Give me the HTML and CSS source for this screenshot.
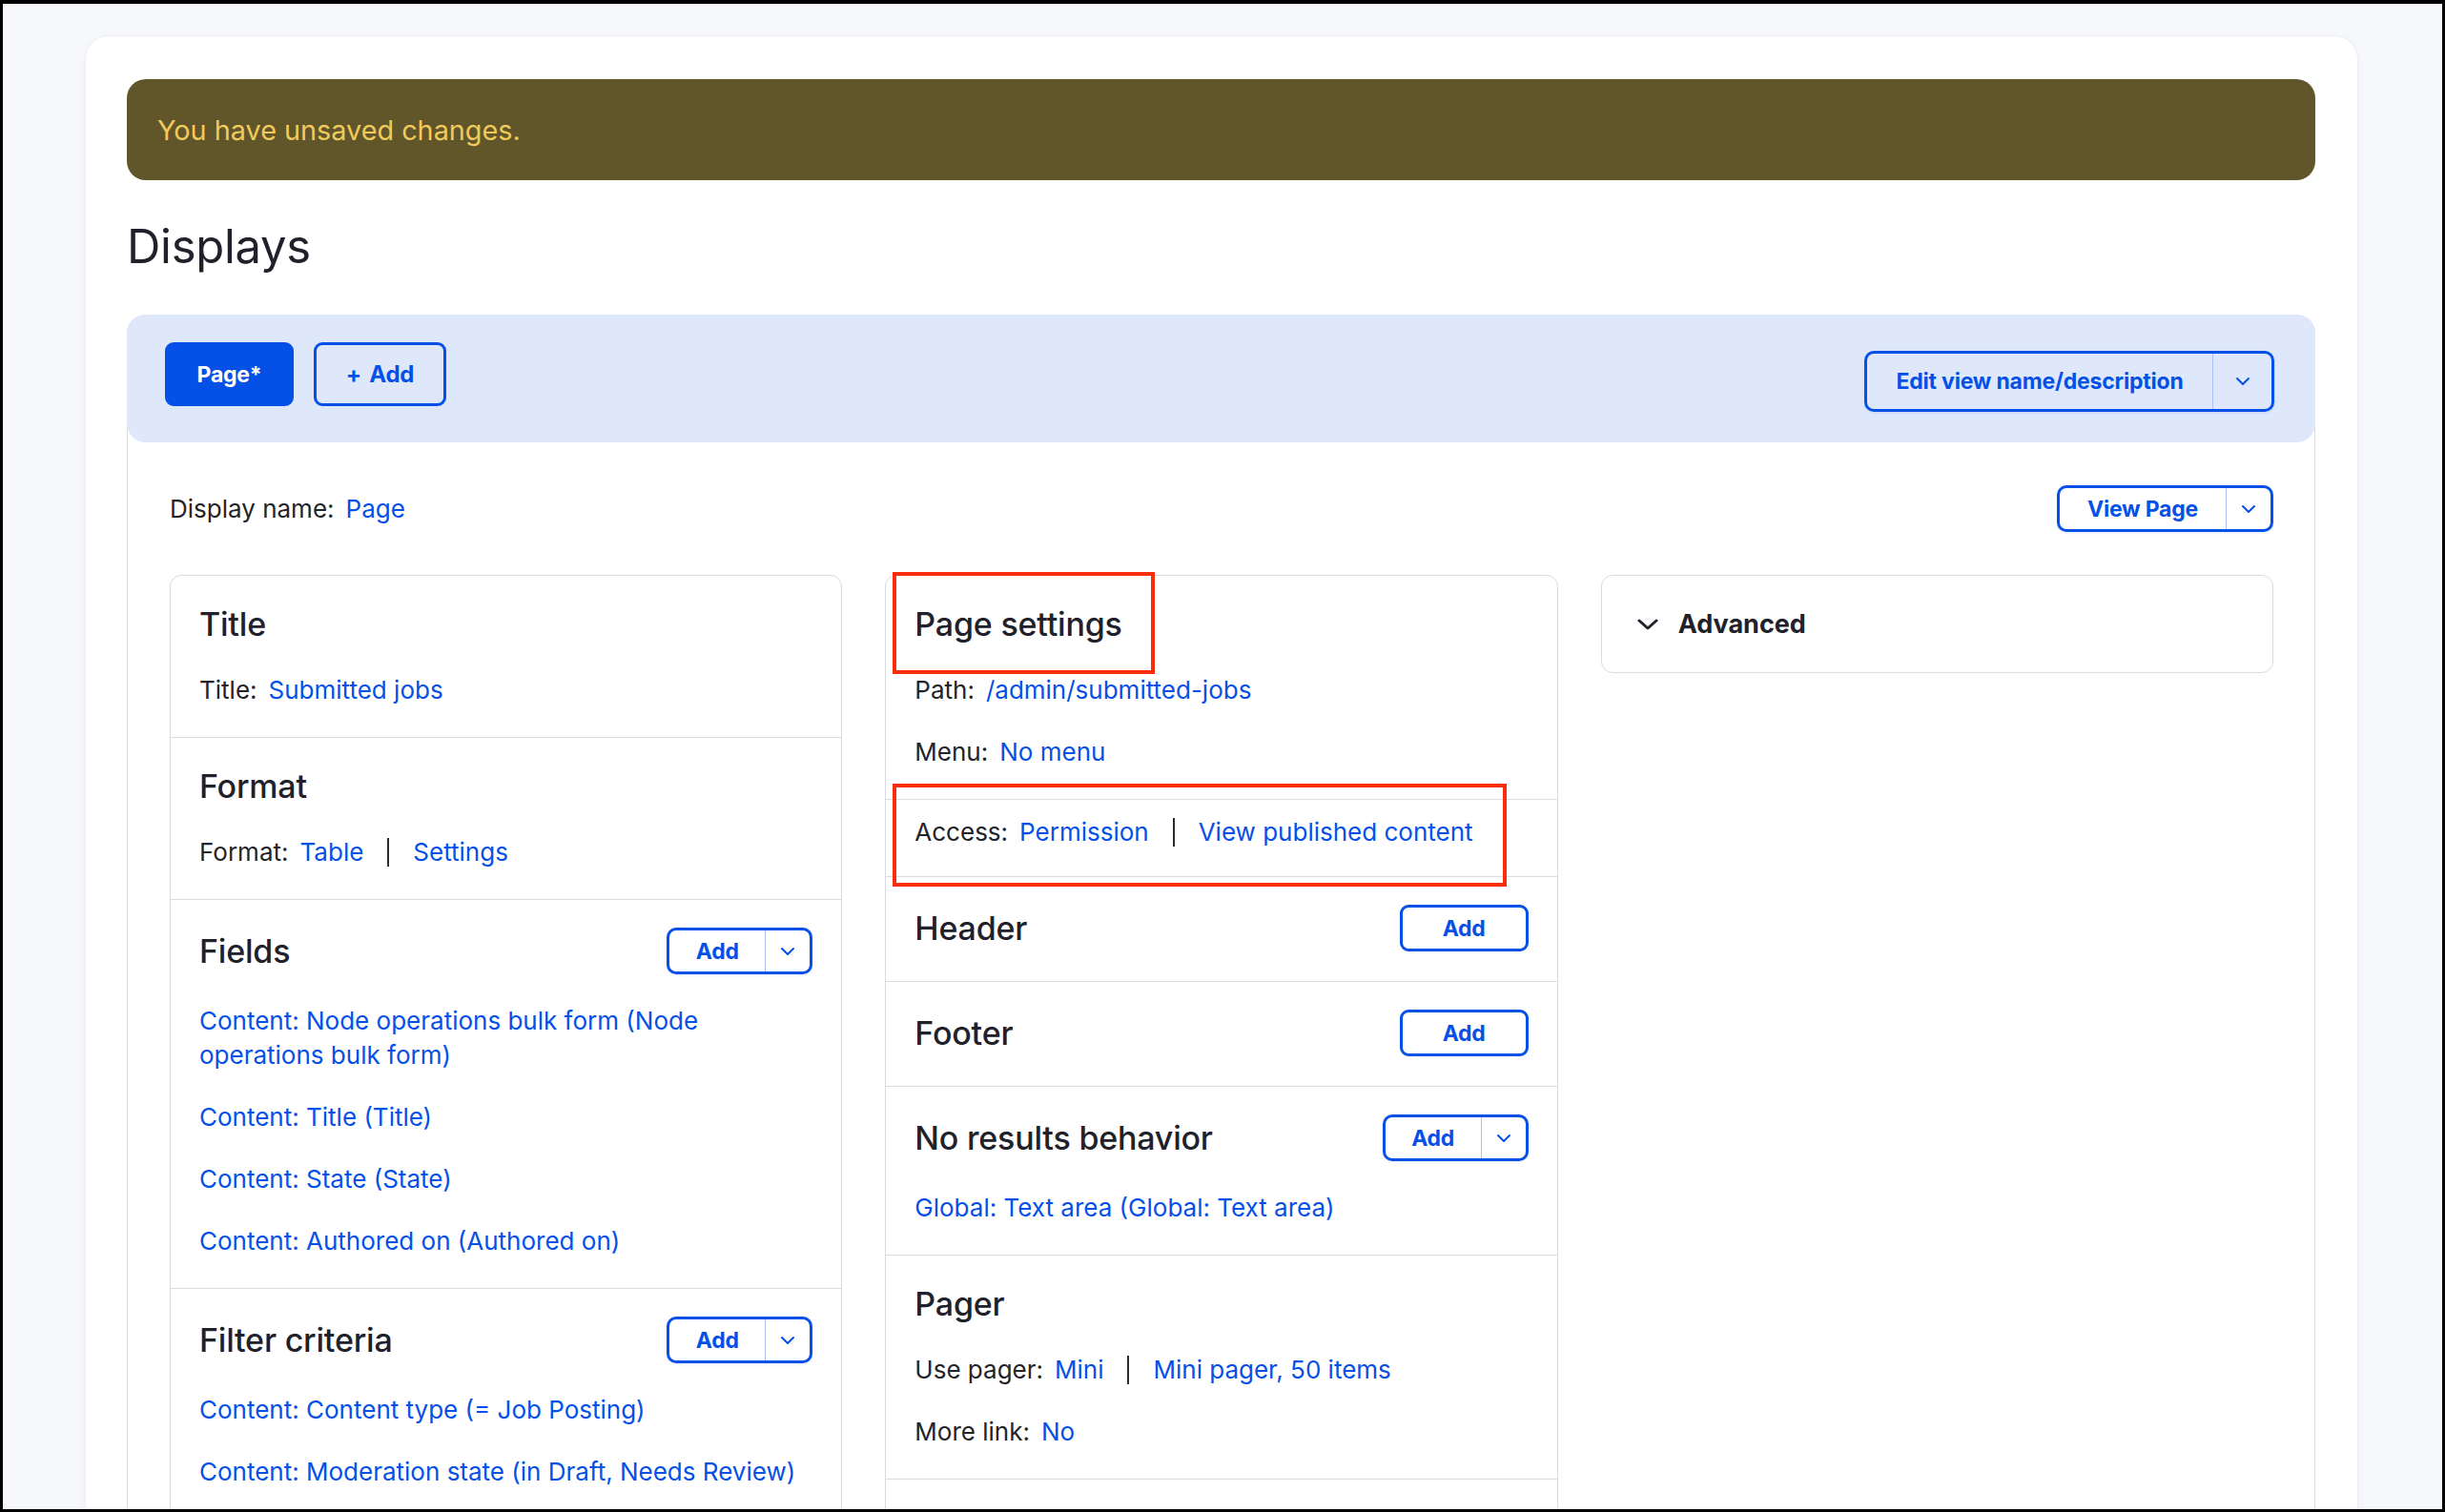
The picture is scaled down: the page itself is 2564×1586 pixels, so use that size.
FILE: index.html
```html
<!DOCTYPE html>
<html lang="en">
<head>
<meta charset="utf-8">
<title>Displays</title>
<link rel="stylesheet" href="styles.css">
</head>
<body>
<div class="viewport">
  <main class="card">
    <div class="banner">You have unsaved changes.</div>
    <h1 class="page-title">Displays</h1>

    <section class="displays">
      <div class="tabbar">
        <div class="tabs">
          <a class="btn btn-primary btn-tab">Page*</a>
          <a class="btn btn-outline btn-tab btn-add-tab">+ Add</a>
        </div>
        <div class="split split-lg">
          <span class="split-main">Edit view name/description</span>
          <span class="split-toggle"><svg class="chev" viewBox="0 0 16 10"><path d="M2 2l6 6 6-6"/></svg></span>
        </div>
      </div>

      <div class="display-body">
        <div class="display-name-row">
          <div class="row-text"><span class="label">Display name:</span><a class="link">Page</a></div>
          <div class="split split-md">
            <span class="split-main">View Page</span>
            <span class="split-toggle"><svg class="chev" viewBox="0 0 16 10"><path d="M2 2l6 6 6-6"/></svg></span>
          </div>
        </div>

        <div class="columns">
          <!-- Left column -->
          <div class="col-card">
            <div class="bucket">
              <h3 class="bucket-title">Title</h3>
              <div class="row-text"><span class="label">Title:</span><a class="link">Submitted jobs</a></div>
            </div>
            <div class="bucket">
              <h3 class="bucket-title">Format</h3>
              <div class="row-text"><span class="label">Format:</span><a class="link">Table</a><span class="sep"></span><a class="link">Settings</a></div>
            </div>
            <div class="bucket">
              <div class="bucket-head">
                <h3 class="bucket-title">Fields</h3>
                <div class="split split-sm">
                  <span class="split-main">Add</span>
                  <span class="split-toggle"><svg class="chev" viewBox="0 0 16 10"><path d="M2 2l6 6 6-6"/></svg></span>
                </div>
              </div>
              <a class="link item">Content: Node operations bulk form (Node operations bulk form)</a>
              <a class="link item">Content: Title (Title)</a>
              <a class="link item">Content: State (State)</a>
              <a class="link item">Content: Authored on (Authored on)</a>
            </div>
            <div class="bucket">
              <div class="bucket-head">
                <h3 class="bucket-title">Filter criteria</h3>
                <div class="split split-sm">
                  <span class="split-main">Add</span>
                  <span class="split-toggle"><svg class="chev" viewBox="0 0 16 10"><path d="M2 2l6 6 6-6"/></svg></span>
                </div>
              </div>
              <a class="link item">Content: Content type (= Job Posting)</a>
              <a class="link item">Content: Moderation state (in Draft, Needs Review)</a>
            </div>
          </div>

          <!-- Middle column -->
          <div class="col-card col-mid">
            <div class="bucket">
              <h3 class="bucket-title">Page settings</h3>
              <div class="row-text"><span class="label">Path:</span><a class="link">/admin/submitted-jobs</a></div>
              <div class="row-text"><span class="label">Menu:</span><a class="link">No menu</a></div>
            </div>
            <div class="bucket bucket-access">
              <div class="row-text"><span class="label">Access:</span><a class="link">Permission</a><span class="sep"></span><a class="link">View published content</a></div>
            </div>
            <div class="bucket">
              <div class="bucket-head">
                <h3 class="bucket-title">Header</h3>
                <a class="btn btn-outline btn-small">Add</a>
              </div>
            </div>
            <div class="bucket">
              <div class="bucket-head">
                <h3 class="bucket-title">Footer</h3>
                <a class="btn btn-outline btn-small">Add</a>
              </div>
            </div>
            <div class="bucket">
              <div class="bucket-head">
                <h3 class="bucket-title">No results behavior</h3>
                <div class="split split-sm">
                  <span class="split-main">Add</span>
                  <span class="split-toggle"><svg class="chev" viewBox="0 0 16 10"><path d="M2 2l6 6 6-6"/></svg></span>
                </div>
              </div>
              <a class="link item">Global: Text area (Global: Text area)</a>
            </div>
            <div class="bucket">
              <h3 class="bucket-title">Pager</h3>
              <div class="row-text"><span class="label">Use pager:</span><a class="link">Mini</a><span class="sep"></span><a class="link">Mini pager, 50 items</a></div>
              <div class="row-text"><span class="label">More link:</span><a class="link">No</a></div>
            </div>
            <div class="bucket bucket-empty"></div>

            <div class="highlight hl-title"></div>
            <div class="highlight hl-access"></div>
          </div>

          <!-- Right column -->
          <div class="col-card col-adv">
            <div class="adv-head">
              <svg class="adv-chev" viewBox="0 0 22 12"><path d="M2 2l9 8 9-8"/></svg>
              <span>Advanced</span>
            </div>
          </div>
        </div>
      </div>
    </section>
  </main>
</div>
</body>
</html>
```

FILE: styles.css
```css
* { box-sizing: border-box; }

html, body {
  margin: 0;
  background: #000;
}

body {
  padding: 4px 3px 3px 3px;
  font-family: Inter, "Noto Sans", "Liberation Sans", sans-serif;
  color: #232429;
}

.viewport {
  height: 1579px;
  overflow: hidden;
  background: #f7f8fc;
  padding: 34px 89px 0 87px;
}

.card {
  background: #fff;
  border-radius: 24px;
  box-shadow: 0 0 0 1px #eceef3, 0 2px 8px rgba(20, 30, 60, 0.04);
  padding: 45px 44px 0 43px;
  min-height: 1700px;
}

.banner {
  height: 106px;
  background: #61552a;
  color: #f0cb5c;
  border-radius: 20px;
  display: flex;
  align-items: center;
  padding: 0 32px;
  font-size: 28.8px;
}

.page-title {
  margin: 41px 0 42px;
  font-size: 49px;
  line-height: 58px;
  font-weight: 400;
  color: #20212b;
  letter-spacing: -0.3px;
}

.displays {
  border: 1px solid #d9dbe1;
  border-bottom: none;
  border-radius: 20px 20px 0 0;
}

.tabbar {
  height: 134px;
  background: #dfe8fa;
  border-radius: 20px;
  display: flex;
  justify-content: space-between;
  align-items: flex-start;
  padding: 29px 43px 0 40px;
  margin: -1px -1px 0 -1px;
}

.tabs {
  display: flex;
  gap: 21px;
}

.btn {
  display: inline-flex;
  align-items: center;
  justify-content: center;
  font-weight: 700;
  font-size: 23px;
  border: 3px solid #0550e6;
  border-radius: 9px;
  color: #0550e6;
  text-decoration: none;
  letter-spacing: -0.2px;
}

.btn-tab {
  height: 67px;
  width: 135px;
}

.btn-add-tab {
  width: 139px;
  font-size: 24px;
  word-spacing: 3px;
}

.btn-primary {
  background: #0550e6;
  color: #fff;
}

.btn-outline { background: transparent; }

.btn-small {
  height: 49px;
  width: 135px;
  background: #fff;
}

.split {
  display: inline-flex;
  border: 3px solid #0550e6;
  border-radius: 10px;
  color: #0550e6;
  font-weight: 700;
  font-size: 23px;
  letter-spacing: -0.2px;
  box-shadow: 0 1px 3px rgba(5, 80, 230, 0.12);
}

.split-main {
  display: flex;
  align-items: center;
  justify-content: center;
  border-right: 1px solid #a9c1f3;
}

.split-toggle {
  display: flex;
  align-items: center;
  justify-content: center;
}

.chev {
  width: 16px;
  height: 10px;
  fill: none;
  stroke: #0550e6;
  stroke-width: 2;
  stroke-linecap: round;
  stroke-linejoin: round;
}

.split-lg {
  height: 64px;
  margin-top: 9px;
}
.split-lg .split-main { width: 363px; }
.split-lg .split-toggle { width: 61px; }

.split-md {
  height: 49px;
  background: #fff;
}
.split-md .split-main { width: 175px; }
.split-md .split-toggle { width: 46px; }

.split-sm {
  height: 49px;
  background: #fff;
}
.split-sm .split-main { width: 101px; }
.split-sm .split-toggle { width: 46px; }

.display-body {
  padding: 45px 43px 0 44px;
}

.display-name-row {
  display: flex;
  justify-content: space-between;
  align-items: center;
  height: 49px;
  margin-bottom: 45px;
}

.row-text {
  font-size: 26px;
  line-height: 36px;
  display: flex;
  align-items: center;
  white-space: nowrap;
}

.label {
  margin-right: 12px;
  color: #232429;
}

.link {
  color: #0550e6;
  text-decoration: none;
}

.sep {
  display: inline-block;
  width: 2px;
  height: 30px;
  background: #2b2c33;
  margin: 0 25px;
}

.columns {
  display: grid;
  grid-template-columns: repeat(3, 1fr);
  gap: 45px;
  align-items: start;
}

.col-card {
  border: 1px solid #d9dbe1;
  border-radius: 12px;
  background: #fff;
  position: relative;
}

.bucket {
  padding: 29px 30px 31px 30px;
  border-top: 1px solid #d9dbe1;
  display: flex;
  flex-direction: column;
  gap: 29px;
}

.bucket:first-child { border-top: none; }

.bucket-access {
  padding-top: 16px;
  padding-bottom: 28px;
}

.bucket-empty { height: 120px; }

.bucket-title {
  margin: 0;
  font-size: 34px;
  line-height: 44px;
  font-weight: 500;
  color: #20212b;
  letter-spacing: -0.2px;
}

.bucket-head {
  display: flex;
  justify-content: space-between;
  align-items: center;
  min-height: 49px;
  margin-bottom: 2px;
}

.bucket-head:last-child { margin-bottom: 0; }

.item {
  display: block;
  font-size: 26px;
  line-height: 36px;
}

.highlight {
  position: absolute;
  border: 4px solid #fa2d0c;
  pointer-events: none;
}

.hl-title {
  left: 7px;
  top: -4px;
  width: 275px;
  height: 107px;
}

.hl-access {
  left: 7px;
  top: 218px;
  width: 644px;
  height: 108px;
}

.col-adv { height: 103px; }

.adv-head {
  height: 101px;
  display: flex;
  align-items: center;
  padding-left: 37px;
  font-size: 27px;
  font-weight: 700;
  color: #20212b;
  gap: 21px;
}

.adv-chev {
  width: 22px;
  height: 12px;
  fill: none;
  stroke: #20212b;
  stroke-width: 3;
  stroke-linecap: round;
  stroke-linejoin: round;
}
```
